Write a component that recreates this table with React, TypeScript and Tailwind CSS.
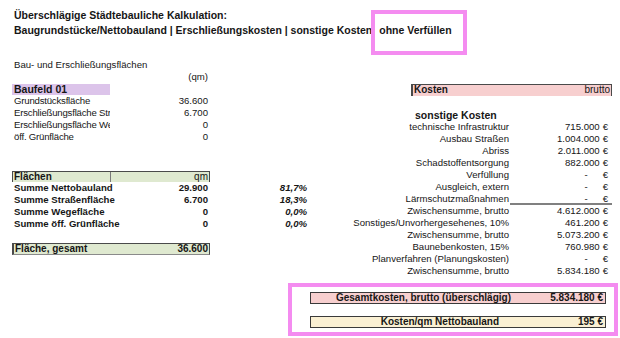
import React from 'react';

type AreaRow = { label: string; value: string };
type SumRow = { label: string; value: string; pct: string };
type CostRow = { label: string; value: string | null; rule?: boolean };

const BAUFELD_ROWS: AreaRow[] = [
  { label: 'Grundstücksfläche', value: '36.600' },
  { label: 'Erschließungsfläche Straßen', value: '6.700' },
  { label: 'Erschließungsfläche Wege', value: '0' },
  { label: 'öff. Grünfläche', value: '0' },
];

const SUM_ROWS: SumRow[] = [
  { label: 'Summe Nettobauland', value: '29.900', pct: '81,7%' },
  { label: 'Summe Straßenfläche', value: '6.700', pct: '18,3%' },
  { label: 'Summe Wegefläche', value: '0', pct: '0,0%' },
  { label: 'Summe öff. Grünfläche', value: '0', pct: '0,0%' },
];

const COST_ROWS: CostRow[] = [
  { label: 'technische Infrastruktur', value: '715.000' },
  { label: 'Ausbau Straßen', value: '1.004.000' },
  { label: 'Abriss', value: '2.011.000' },
  { label: 'Schadstoffentsorgung', value: '882.000' },
  { label: 'Verfüllung', value: null },
  { label: 'Ausgleich, extern', value: null },
  { label: 'Lärmschutzmaßnahmen', value: null, rule: true },
  { label: 'Zwischensumme, brutto', value: '4.612.000' },
  { label: 'Sonstiges/Unvorhergesehenes, 10%', value: '461.200' },
  { label: 'Zwischensumme, brutto', value: '5.073.200' },
  { label: 'Baunebenkosten, 15%', value: '760.980' },
  { label: 'Planverfahren (Planungskosten)', value: null },
  { label: 'Zwischensumme, brutto', value: '5.834.180' },
];

function Euro({ value }: { value: string | null }) {
  return (
    <div className="flex justify-end pr-[4px]">
      {value === null ? (
        <span className="mr-[12px]">-</span>
      ) : (
        <span>{value}</span>
      )}
      <span className="ml-[3px]">€</span>
    </div>
  );
}

export default function App() {
  return (
    <div className="relative h-[338px] w-[620px] overflow-hidden bg-white font-['Liberation_Sans',Arial,sans-serif] text-[9.6px] leading-[12px] text-[#161616]">
      {/* heading */}
      <div className="pl-[14px] pt-[8px] text-[10.5px] font-bold leading-[15px]">
        <div>Überschlägige Städtebauliche Kalkulation:</div>
        <div className="flex">
          <span>Baugrundstücke/Nettobauland | Erschließungskosten | sonstige Kosten</span>
          <span className="ml-[7px]">ohne Verfüllen</span>
        </div>
      </div>
      <div className="absolute left-[371px] top-[10px] h-[45px] w-[96px] border-4 border-[#f48cf0]" />

      <div className="mt-[21px] flex">
        {/* areas */}
        <div className="w-[310px] pl-[12px]">
          <div className="h-[12px] pl-[2px]">Bau- und Erschließungsflächen</div>
          <div className="h-[12px] w-[198px] pr-[2px] text-right">(qm)</div>
          <div className="mt-[1px] h-[11px] w-[98px] bg-[#dcc4ea] pl-[2px] text-[10.5px] font-bold leading-[11px]">
            Baufeld 01
          </div>
          {BAUFELD_ROWS.map((r) => (
            <div key={r.label} className="flex h-[12px]">
              <div className="w-[98px] overflow-hidden whitespace-nowrap pl-[2px] tracking-[-0.2px]">{r.label}</div>
              <div className="w-[100px] pr-[2px] text-right">{r.value}</div>
            </div>
          ))}

          <div className="mt-[28px] flex h-[11px] w-[198px] border-x border-t border-[#4a4a4a] border-b-[#9a9a9a] bg-[#dfe9d0] text-[10px] leading-[10px]">
            <div className="w-[98px] border-r border-[#7a7a7a] pl-[1px] font-bold">Flächen</div>
            <div className="flex-1 pr-[1px] text-right">qm</div>
          </div>
          {SUM_ROWS.map((r) => (
            <div key={r.label} className="flex h-[12px] font-bold">
              <div className="w-[98px] whitespace-nowrap pl-[2px]">{r.label}</div>
              <div className="w-[100px] pr-[2px] text-right">{r.value}</div>
              <div className="w-[98px] pr-[1px] text-right italic">{r.pct}</div>
            </div>
          ))}

          <div className="mt-[13px] flex h-[12px] w-[198px] border border-l-2 border-[#4a4a4a] border-b-[#8a8a8a] bg-[#dfe9d0] text-[10px] font-bold leading-[10px]">
            <div className="flex-1 pl-[1px]">Fläche, gesamt</div>
            <div className="pr-[1px]">36.600</div>
          </div>
        </div>

        {/* costs */}
        <div className="flex-1">
          <div className="ml-[101px] mt-[25px] flex h-[12px] w-[201px] border-x border-t border-l-2 border-[#4a4a4a] border-b-[#b0a0a0] bg-[#f7cfcf] text-[10px] leading-[10px]">
            <div className="flex-1 pl-[1px] font-bold">Kosten</div>
            <div className="pr-[1px]">brutto</div>
          </div>
          <div className="mt-[13px] h-[12px] pl-[105px] text-[10.5px] font-bold">sonstige Kosten</div>
          {COST_ROWS.map((r, i) => (
            <div key={i} className="flex h-[12px]">
              <div className="w-[199px] whitespace-nowrap text-right">{r.label}</div>
              <div className={r.rule ? 'ml-[1px] w-[102px] border-b-2 border-[#808080]' : 'ml-[1px] w-[102px]'}>
                <Euro value={r.value} />
              </div>
            </div>
          ))}
        </div>
      </div>

      {/* totals */}
      <div className="ml-[288px] mt-[6px] h-[53px] w-[330px] border-4 border-[#f48cf0] pl-[18px] pt-[5px] text-[10px]">
        <div className="flex h-[12px] w-[296px] border border-[#3a3a3a] bg-[#f7cfcf] font-bold leading-[10px]">
          <div className="w-[200px] text-right">Gesamtkosten, brutto (überschlägig)</div>
          <div className="flex-1 pr-[2px] text-right">5.834.180 €</div>
        </div>
        <div className="mt-[12px] flex h-[12px] w-[296px] border border-[#3a3a3a] bg-[#faf0d3] font-bold leading-[10px]">
          <div className="w-[188px] text-right">Kosten/qm Nettobauland</div>
          <div className="flex-1 pr-[2px] text-right">195 €</div>
        </div>
      </div>
    </div>
  );
}
